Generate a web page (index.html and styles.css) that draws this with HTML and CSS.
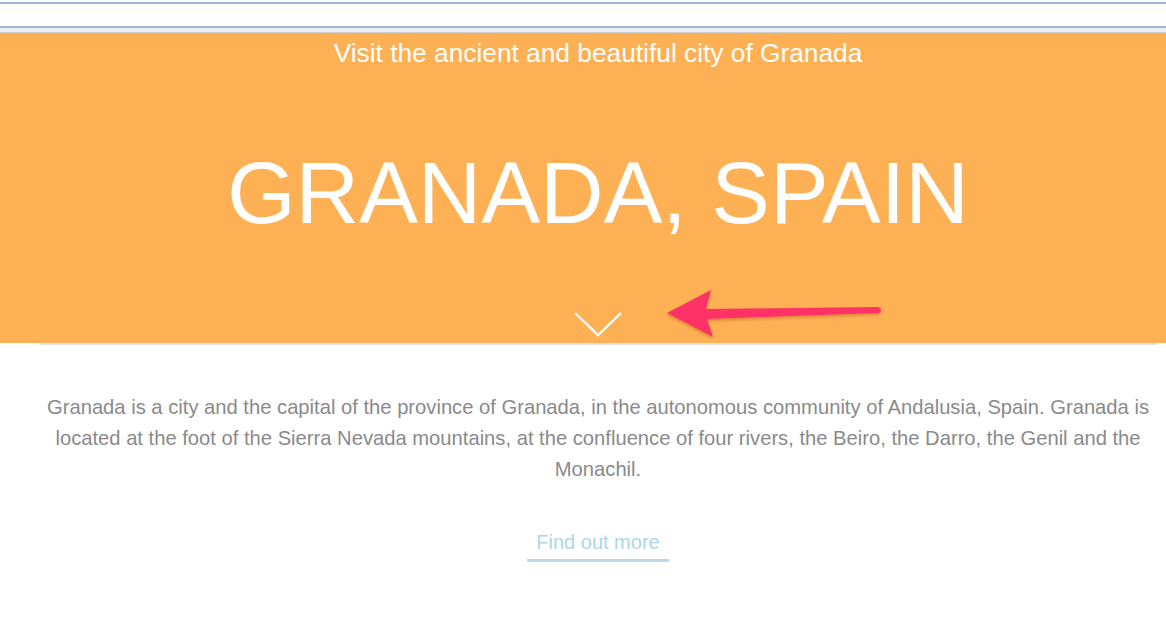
FILE: index.html
```html
<!DOCTYPE html>
<html>
<head>
<meta charset="utf-8">
<link rel="stylesheet" href="styles.css">
</head>
<body>
<div class="topbar"></div>
<div class="strip"></div>
<header class="hero">
  <p class="subtitle">Visit the ancient and beautiful city of Granada</p>
  <h1 class="title">GRANADA, SPAIN</h1>
  <div class="chevron">
    <svg width="50" height="26" viewBox="0 0 50 26"><polyline points="2,2 25,24 48,2" fill="none" stroke="#fff" stroke-width="2.4"/></svg>
  </div>
</header>
<svg class="annot-arrow" width="230" height="60" viewBox="0 0 230 60">
  <defs>
    <filter id="sh" x="-10%" y="-30%" width="120%" height="160%">
      <feDropShadow dx="0" dy="2" stdDeviation="1.5" flood-color="#a0300a" flood-opacity="0.35"/>
    </filter>
  </defs>
  <path d="M2,28 L46,5 L41,24 L212,22 Q216,22 216,25 Q216,28 212,28 L42,34 L48,52 Z" fill="#ff3368" filter="url(#sh)"/>
</svg>
<main class="content">
  <p class="intro">Granada is a city and the capital of the province of Granada, in the autonomous community of Andalusia, Spain. Granada is located at the foot of the Sierra Nevada mountains, at the confluence of four rivers, the Beiro, the Darro, the Genil and the Monachil.</p>
  <a class="more" href="#">Find out more</a>
</main>
</body>
</html>
```
FILE: styles.css
```css
html, body {
  margin: 0;
  padding: 0;
  background: #fff;
  font-family: "Liberation Sans", Arial, Helvetica, sans-serif;
}
body {
  position: relative;
  width: 1166px;
  height: 634px;
  overflow: hidden;
}
.topbar {
  margin-top: 2px;
  height: 22px;
  border-top: 2px solid #9fb4d6;
  border-bottom: 2px solid #9fb4d6;
  background: #fff;
}
.strip {
  height: 4px;
  background: #e9eef5;
  border-bottom: 1px solid #cfcfcf;
}
.hero {
  background: #feb154;
  height: 310px;
  display: flex;
  flex-direction: column;
  align-items: center;
  padding: 0 9px 0 39px;
  box-sizing: border-box;
  color: #fff;
}
.subtitle {
  margin: 5px 0 0;
  font-size: 26.3px;
  line-height: 30px;
  white-space: nowrap;
}
.title {
  margin: 75px 0 0;
  font-size: 88px;
  font-weight: 400;
  line-height: 100px;
  white-space: nowrap;
}
.chevron {
  margin-top: 68px;
  height: 26px;
}
.chevron svg { display: block; }
.annot-arrow {
  position: absolute;
  left: 665px;
  top: 285px;
}
.content {
  margin: 0 9px 0 39px;
  border-top: 2px solid #e3e3e3;
  display: flex;
  flex-direction: column;
  align-items: center;
}
.intro {
  margin: 47px 0 0;
  font-size: 20.2px;
  line-height: 31px;
  color: #8a8a8a;
  text-align: center;
}
.more {
  margin-top: 46px;
  font-size: 20px;
  color: #add6e6;
  text-decoration: none;
  padding: 0 9px 5px;
  border-bottom: 3px solid #b9dbe8;
}
```
